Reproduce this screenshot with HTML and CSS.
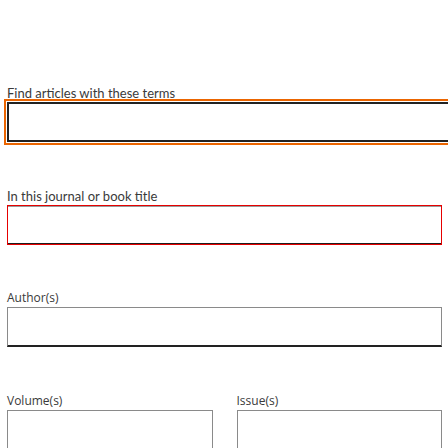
FILE: index.html
```html
<!DOCTYPE html>
<html lang="en">
<head>
<meta charset="utf-8">
<title>Advanced search</title>
<link rel="stylesheet" href="styles.css">
</head>
<body>
<form class="search-form">
  <div class="field">
    <label class="label label-alt" for="terms">Find articles with these terms</label>
    <input class="input input-focus" id="terms" type="text">
  </div>
  <div class="field">
    <label class="label label-alt" for="journal">In this journal or book title</label>
    <input class="input input-error" id="journal" type="text">
  </div>
  <div class="field">
    <label class="label" for="authors">Author(s)</label>
    <input class="input input-line" id="authors" type="text">
  </div>
  <div class="field-row">
    <div class="field">
      <label class="label" for="volumes">Volume(s)</label>
      <input class="input" id="volumes" type="text">
    </div>
    <div class="field">
      <label class="label" for="issues">Issue(s)</label>
      <input class="input" id="issues" type="text">
    </div>
  </div>
</form>
</body>
</html>
```

FILE: styles.css
```css
html, body {
  margin: 0;
  padding: 0;
  background: #ffffff;
  overflow: hidden;
}

body {
  font-family: "Open Sans", "Noto Sans", sans-serif;
  font-weight: 400;
  color: #3a3a3a;
}

.search-form {
  padding: 84px 6px 0 7px;
}

.field {
  margin-bottom: 44.5px;
}

.label {
  display: block;
  font-size: 12px;
  font-weight: 400;
  line-height: 18px;
  height: 18px;
}

.label-alt {
  font-family: "Lato", "Open Sans", sans-serif;
  font-size: 13px;
}

.input {
  display: block;
  box-sizing: border-box;
  width: 100%;
  height: 40px;
  margin: 0;
  padding: 0 8px;
  border: 1px solid #8a8a8a;
  border-radius: 0;
  background: #ffffff;
  font: inherit;
  outline: none;
}

.input-focus {
  width: calc(100% + 24px);
  border: 2px solid #222222;
  outline: 2px solid #eb6500;
  outline-offset: 1px;
}

.input-error {
  border: 1px solid #e60000;
  box-shadow: inset 0 1px 0 #9a9a9a, inset 0 -1px 0 #1e1e1e;
}

.input-line {
  border-bottom: 2px solid #222222;
}

.field-row {
  display: grid;
  grid-template-columns: 1fr 1fr;
  column-gap: 24px;
}
```
